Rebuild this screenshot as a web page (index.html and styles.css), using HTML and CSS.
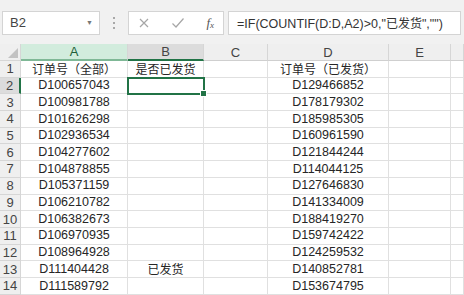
FILE: index.html
```html
<!DOCTYPE html>
<html lang="zh">
<head>
    <meta charset="UTF-8">
    <title>Excel</title>
    <link rel="stylesheet" href="styles.css">
</head>
<body>

<div class="toolbar">
    <div class="name-box">
        <span>B2</span>
        <span class="caret">&#9660;</span>
    </div>
    <div class="grip"><i></i><i></i><i></i></div>
    <div class="fx-buttons">
        <svg width="12" height="12" viewBox="0 0 12 12"><path d="M2 2 L10 10 M10 2 L2 10" stroke="#a6a6a6" stroke-width="1.2" fill="none"/></svg>
        <svg width="14" height="12" viewBox="0 0 14 12"><path d="M1.5 6.5 L5 10 L12.5 1.5" stroke="#a6a6a6" stroke-width="1.2" fill="none"/></svg>
        <span class="fx">f<sub>x</sub></span>
    </div>
    <div class="formula">=IF(COUNTIF(D:D,A2)&gt;0,"<span class="cjk">已发货</span>","")</div>
</div>

<div class="sheet">
    <div class="row head">
        <div class="corner"><svg width="10" height="10" viewBox="0 0 10 10"><path d="M10 0 L10 10 L0 10 Z" fill="#c2c2c2"/></svg></div>
        <div class="col active">A</div>
        <div class="col current">B</div>
        <div class="col">C</div>
        <div class="col">D</div>
        <div class="col">E</div>
        <div class="col"></div>
    </div>
    <div class="row"><div class="num">1</div><div class="cell cjk">订单号（全部）</div><div class="cell cjk">是否已发货</div><div class="cell"></div><div class="cell cjk">订单号（已发货）</div><div class="cell"></div><div class="cell"></div></div>
    <div class="row"><div class="num current">2</div><div class="cell">D100657043</div><div class="cell selected"><span class="handle"></span></div><div class="cell"></div><div class="cell">D129466852</div><div class="cell"></div><div class="cell"></div></div>
    <div class="row"><div class="num">3</div><div class="cell">D100981788</div><div class="cell"></div><div class="cell"></div><div class="cell">D178179302</div><div class="cell"></div><div class="cell"></div></div>
    <div class="row"><div class="num">4</div><div class="cell">D101626298</div><div class="cell"></div><div class="cell"></div><div class="cell">D185985305</div><div class="cell"></div><div class="cell"></div></div>
    <div class="row"><div class="num">5</div><div class="cell">D102936534</div><div class="cell"></div><div class="cell"></div><div class="cell">D160961590</div><div class="cell"></div><div class="cell"></div></div>
    <div class="row"><div class="num">6</div><div class="cell">D104277602</div><div class="cell"></div><div class="cell"></div><div class="cell">D121844244</div><div class="cell"></div><div class="cell"></div></div>
    <div class="row"><div class="num">7</div><div class="cell">D104878855</div><div class="cell"></div><div class="cell"></div><div class="cell">D114044125</div><div class="cell"></div><div class="cell"></div></div>
    <div class="row"><div class="num">8</div><div class="cell">D105371159</div><div class="cell"></div><div class="cell"></div><div class="cell">D127646830</div><div class="cell"></div><div class="cell"></div></div>
    <div class="row"><div class="num">9</div><div class="cell">D106210782</div><div class="cell"></div><div class="cell"></div><div class="cell">D141334009</div><div class="cell"></div><div class="cell"></div></div>
    <div class="row"><div class="num">10</div><div class="cell">D106382673</div><div class="cell"></div><div class="cell"></div><div class="cell">D188419270</div><div class="cell"></div><div class="cell"></div></div>
    <div class="row"><div class="num">11</div><div class="cell">D106970935</div><div class="cell"></div><div class="cell"></div><div class="cell">D159742422</div><div class="cell"></div><div class="cell"></div></div>
    <div class="row"><div class="num">12</div><div class="cell">D108964928</div><div class="cell"></div><div class="cell"></div><div class="cell">D124259532</div><div class="cell"></div><div class="cell"></div></div>
    <div class="row"><div class="num">13</div><div class="cell">D111404428</div><div class="cell cjk">已发货</div><div class="cell"></div><div class="cell">D140852781</div><div class="cell"></div><div class="cell"></div></div>
    <div class="row"><div class="num">14</div><div class="cell">D111589792</div><div class="cell"></div><div class="cell"></div><div class="cell">D153674795</div><div class="cell"></div><div class="cell"></div></div>
</div>

</body>
</html>
```

FILE: styles.css
```css
body {
    margin: 0;
    background: #ffffff;
    font-family: "Liberation Sans", "Noto Sans CJK SC", sans-serif;
    font-size: 12.5px;
    color: #262626;
    overflow: hidden;
}
.toolbar {
    display: flex;
    align-items: center;
    height: 44px;
    padding-top: 1px;
    box-sizing: border-box;
    background: #f1f1f1;
}
.name-box {
    display: flex;
    align-items: center;
    justify-content: space-between;
    box-sizing: border-box;
    width: 98px;
    height: 24px;
    margin-left: 2px;
    padding: 0 6px 0 7px;
    background: #ffffff;
    border: 1px solid #d4d4d4;
    font-size: 13px;
    color: #444;
}
.caret {
    font-size: 7px;
    color: #777;
}
.grip {
    display: flex;
    flex-direction: column;
    align-items: center;
    gap: 3px;
    width: 28px;
}
.grip i {
    width: 2px;
    height: 2px;
    background: #a8a8a8;
}
.fx-buttons {
    display: flex;
    align-items: center;
    justify-content: space-between;
    box-sizing: border-box;
    width: 96px;
    height: 24px;
    padding: 0 9px 0 9px;
    background: #ffffff;
    border: 1px solid #d4d4d4;
}
.fx {
    font-family: "Liberation Serif", serif;
    font-style: italic;
    font-size: 13px;
    color: #555;
}
.fx sub {
    font-size: 9px;
    vertical-align: -1px;
}
.formula {
    flex: 1;
    box-sizing: border-box;
    height: 24px;
    margin: 0 3px 0 4px;
    padding: 0 8px;
    line-height: 22px;
    background: #ffffff;
    border: 1px solid #d4d4d4;
    font-size: 12.5px;
    color: #333;
    white-space: nowrap;
}
.cjk {
    font-family: "Noto Sans CJK SC", sans-serif;
    font-size: 12px;
}
.row {
    display: grid;
    grid-template-columns: 21px 107px 76px 64px 121px 62px 1fr;
    height: 16.7px;
}
.row.head {
    height: 17px;
    background: #efefef;
}
.corner {
    display: flex;
    align-items: flex-end;
    justify-content: flex-end;
    padding: 0 2px 2px 0;
    border-right: 1px solid #d6d6d6;
    border-bottom: 1px solid #d6d6d6;
}
.col {
    display: flex;
    align-items: center;
    justify-content: center;
    border-right: 1px solid #d6d6d6;
    border-bottom: 1px solid #cfcfcf;
    font-size: 13px;
    color: #444;
}
.col.active {
    background: #d2ecdd;
    color: #1f5f3a;
    border-bottom: 2px solid #7fb896;
}
.col.current {
    background: #dcdcdc;
    border-bottom: 2px solid #217346;
}
.num {
    display: flex;
    align-items: center;
    justify-content: center;
    background: #efefef;
    border-right: 1px solid #d6d6d6;
    border-bottom: 1px solid #d6d6d6;
    font-size: 13px;
    color: #444;
}
.num.current {
    background: #dcdcdc;
    border-right: 2px solid #217346;
}
.cell {
    display: flex;
    align-items: center;
    justify-content: center;
    border-right: 1px solid #e0e0e0;
    border-bottom: 1px solid #e0e0e0;
    white-space: nowrap;
    line-height: 1;
}
.cell.selected {
    position: relative;
    outline: 2px solid #217346;
    outline-offset: -1px;
}
.handle {
    position: absolute;
    right: -4px;
    bottom: -4px;
    width: 5px;
    height: 5px;
    background: #217346;
    border: 1px solid #ffffff;
}
```
